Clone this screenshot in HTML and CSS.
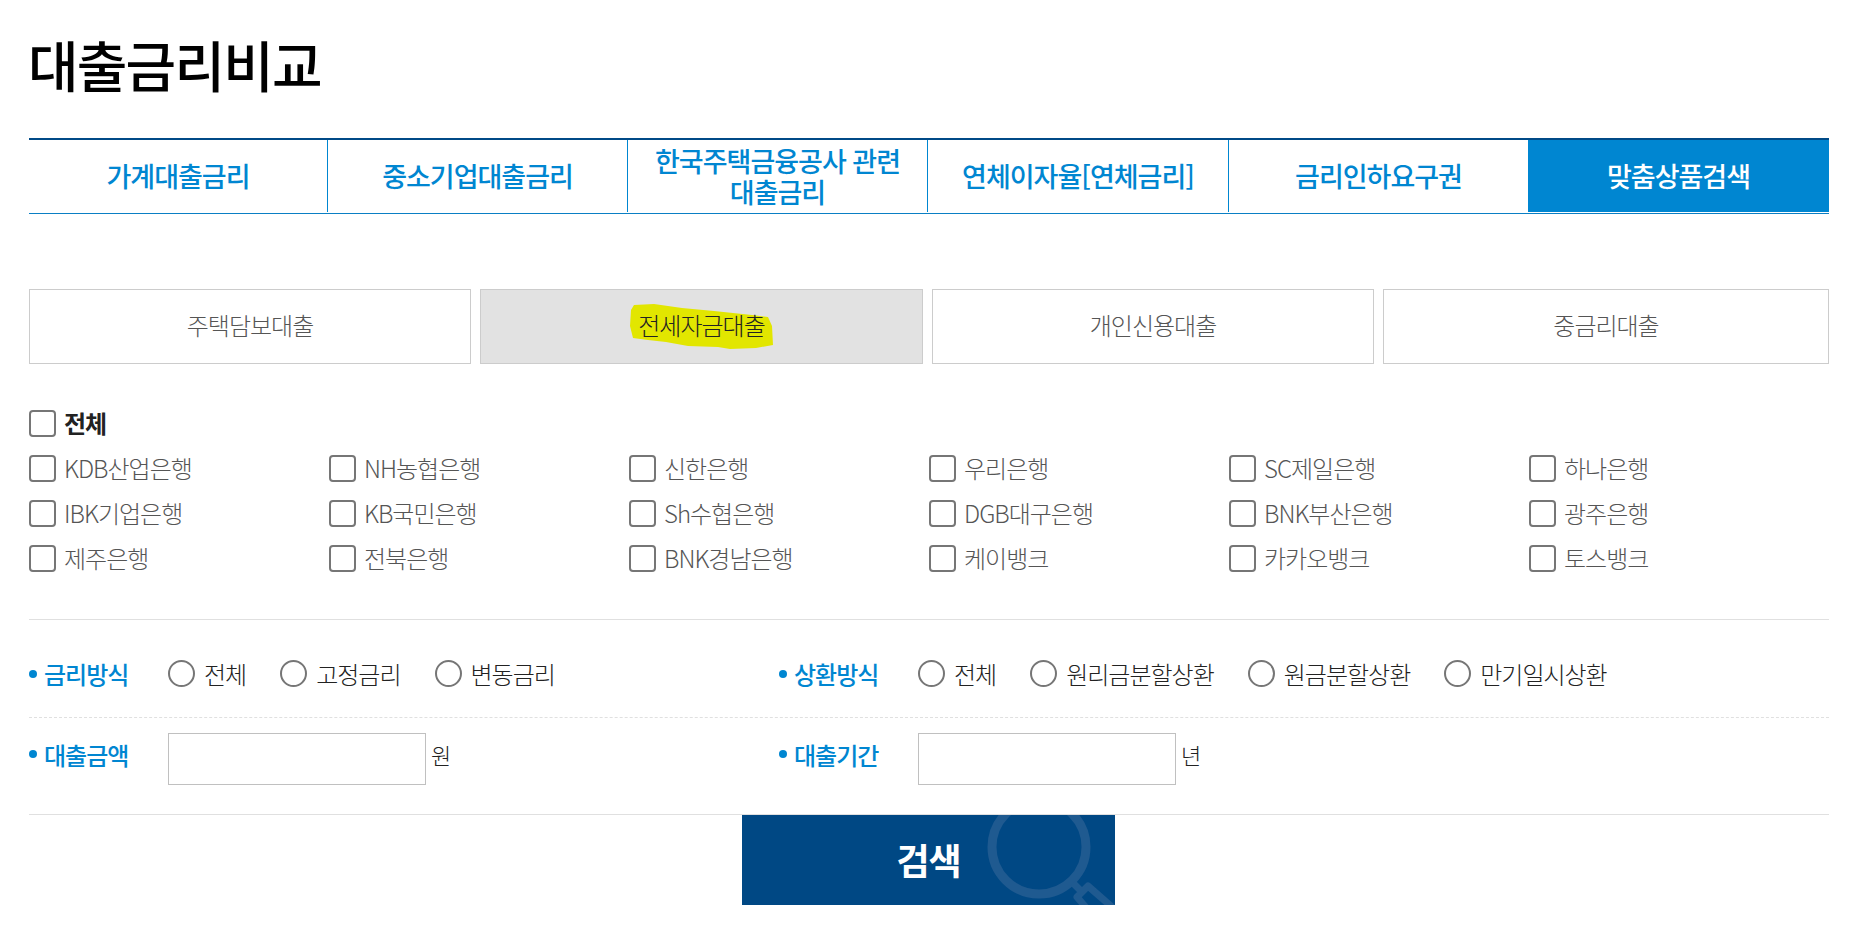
FILE: index.html
```html
<!DOCTYPE html>
<html lang="ko">
<head>
<meta charset="utf-8">
<title>대출금리비교</title>
<link rel="stylesheet" href="styles.css">
</head>
<body>
<main class="page">
  <h1 class="title">대출금리비교</h1>
  <nav class="tabs">
    <a class="tab">가계대출금리</a>
    <a class="tab">중소기업대출금리</a>
    <a class="tab">한국주택금융공사 관련<br>대출금리</a>
    <a class="tab">연체이자율[연체금리]</a>
    <a class="tab tab-plain">금리인하요구권</a>
    <a class="tab tab-active">맞춤상품검색</a>
  </nav>
  <div class="subtabs">
    <a class="subtab">주택담보대출</a>
    <a class="subtab subtab-active">
      <svg class="marker" width="144" height="46" viewBox="0 0 144 46"><path d="M1 6 L4 1 L24 0 L52 4 L84 7 L122 11 L138 13 L142 22 L143 41 L126 44 L100 45 L88 43 L58 42 L36 38 L18 36 L3 34 L0 22 Z" fill="#e2e600"/></svg>
      <span class="subtab-text">전세자금대출</span>
    </a>
    <a class="subtab">개인신용대출</a>
    <a class="subtab">중금리대출</a>
  </div>
  <label class="check check-all"><input type="checkbox"><span>전체</span></label>
  <div class="banks">
    <label class="check"><input type="checkbox"><span>KDB산업은행</span></label>
    <label class="check"><input type="checkbox"><span>NH농협은행</span></label>
    <label class="check"><input type="checkbox"><span>신한은행</span></label>
    <label class="check"><input type="checkbox"><span>우리은행</span></label>
    <label class="check"><input type="checkbox"><span>SC제일은행</span></label>
    <label class="check"><input type="checkbox"><span>하나은행</span></label>
    <label class="check"><input type="checkbox"><span>IBK기업은행</span></label>
    <label class="check"><input type="checkbox"><span>KB국민은행</span></label>
    <label class="check"><input type="checkbox"><span>Sh수협은행</span></label>
    <label class="check"><input type="checkbox"><span>DGB대구은행</span></label>
    <label class="check"><input type="checkbox"><span>BNK부산은행</span></label>
    <label class="check"><input type="checkbox"><span>광주은행</span></label>
    <label class="check"><input type="checkbox"><span>제주은행</span></label>
    <label class="check"><input type="checkbox"><span>전북은행</span></label>
    <label class="check"><input type="checkbox"><span>BNK경남은행</span></label>
    <label class="check"><input type="checkbox"><span>케이뱅크</span></label>
    <label class="check"><input type="checkbox"><span>카카오뱅크</span></label>
    <label class="check"><input type="checkbox"><span>토스뱅크</span></label>
  </div>
  <section class="options">
    <div class="opt-row opt-row-radio">
      <div class="opt-group">
        <span class="opt-label">금리방식</span>
        <div class="radios">
          <label class="radio"><input type="radio" name="rate"><span>전체</span></label>
          <label class="radio"><input type="radio" name="rate"><span>고정금리</span></label>
          <label class="radio"><input type="radio" name="rate"><span>변동금리</span></label>
        </div>
      </div>
      <div class="opt-group">
        <span class="opt-label">상환방식</span>
        <div class="radios">
          <label class="radio"><input type="radio" name="repay"><span>전체</span></label>
          <label class="radio"><input type="radio" name="repay"><span>원리금분할상환</span></label>
          <label class="radio"><input type="radio" name="repay"><span>원금분할상환</span></label>
          <label class="radio"><input type="radio" name="repay"><span>만기일시상환</span></label>
        </div>
      </div>
    </div>
    <div class="opt-row opt-row-input">
      <div class="opt-group">
        <span class="opt-label">대출금액</span>
        <input class="field" type="text"><span class="unit">원</span>
      </div>
      <div class="opt-group">
        <span class="opt-label">대출기간</span>
        <input class="field" type="text"><span class="unit">년</span>
      </div>
    </div>
  </section>
  <button class="search" type="button">
    <svg class="search-icon" width="373" height="90" viewBox="0 0 373 90">
      <circle cx="297" cy="32" r="47" fill="none" stroke="#1f5a90" stroke-width="9"/>
      <path d="M331 68 L341 78 M347 96 L335 82 L346 71 L378 99" fill="none" stroke="#1f5a90" stroke-width="7" stroke-linejoin="round"/>
    </svg>
    <span class="search-text">검색</span>
  </button>
</main>
</body>
</html>
```
FILE: styles.css
```css
* { box-sizing: border-box; }
html, body { margin: 0; padding: 0; background: #fff; }
body { font-family: "Noto Sans CJK KR", "Noto Sans", sans-serif; color: #222; }
.page { width: 1800px; margin-left: 29px; }
.title { margin: 0 0 0 -1px; height: 138px; padding-top: 24px; font-size: 55px; line-height: 78px; font-weight: 500; letter-spacing: -1.8px; color: #000; }
.tabs { display: grid; grid-template-columns: 299px 300px 300px 301px 299px 301px; height: 76px; border-top: 2px solid #004a87; border-bottom: 1px solid #0a7fc4; }
.tab { display: flex; align-items: center; justify-content: center; text-align: center; height: 72px; padding-bottom: 1px; border-right: 1px solid #0086d1; font-size: 27px; line-height: 31px; font-weight: 500; letter-spacing: -1px; color: #0086d1; }
.tab-plain { border-right: 0; }
.tab-active { background: #0086d1; color: #fff; border-right: 0; }
.subtabs { display: grid; grid-template-columns: 442px 443px 442px 1fr; gap: 9px; margin-top: 75px; }
.subtab { position: relative; display: flex; align-items: center; justify-content: center; height: 75px; padding-bottom: 5px; border: 1px solid #ccc; font-size: 24px; font-weight: 300; letter-spacing: -1px; color: #555; }
.subtab-active { background: #e2e2e2; color: #222; }
.marker { position: absolute; left: 149px; top: 14px; }
.subtab-text { position: relative; }
.check { display: flex; align-items: center; gap: 8px; height: 45px; font-size: 24px; font-weight: 300; letter-spacing: -1px; color: #555; }
.check span { padding-bottom: 2px; }
.check input, .radio input { appearance: none; margin: 0; flex: none; width: 27px; height: 27px; background: #fff; border: 2px solid #767676; }
.check input { border-radius: 4px; }
.radio input { border-radius: 50%; }
.check-all { margin-top: 37px; font-weight: 700; color: #222; }
.banks { display: grid; grid-template-columns: repeat(6, 300px); }
.options { margin-top: 38px; border-top: 1px solid #e0e0e0; }
.opt-row { display: grid; grid-template-columns: 750px 1fr; }
.opt-row-radio { height: 98px; padding-top: 36px; border-bottom: 1px dashed #e0e0e0; align-items: start; }
.opt-row-input { height: 97px; padding-top: 15px; border-bottom: 1px solid #e0e0e0; align-items: start; }
.opt-group { display: flex; align-items: center; }
.opt-row-input .opt-group { height: 52px; }
.opt-row-input .opt-label, .unit { margin-bottom: 10px; }
.opt-label { position: relative; width: 139px; padding-left: 15px; font-size: 24px; font-weight: 500; letter-spacing: -1px; color: #0086d1; }
.opt-label::before { content: ""; position: absolute; left: 0; top: 50%; width: 8px; height: 8px; margin-top: -4px; border-radius: 50%; background: #0086d1; }
.radios { display: flex; gap: 34px; }
.radio { display: flex; align-items: center; gap: 9px; height: 27px; font-size: 24px; font-weight: 300; letter-spacing: -1px; color: #222; }
.field { width: 258px; height: 52px; border: 1px solid #c0c0c0; background: #fff; }
.unit { margin-left: 5px; font-size: 22px; font-weight: 300; color: #222; }
.search { position: relative; display: flex; align-items: center; justify-content: center; width: 373px; height: 90px; margin: 0 0 0 713px; padding: 0 0 2px; border: 0; background: #004884; overflow: hidden; font-family: inherit; }
.search-icon { position: absolute; left: 0; top: 0; }
.search-text { position: relative; font-size: 36px; font-weight: 700; letter-spacing: -1px; color: #fff; }
```
